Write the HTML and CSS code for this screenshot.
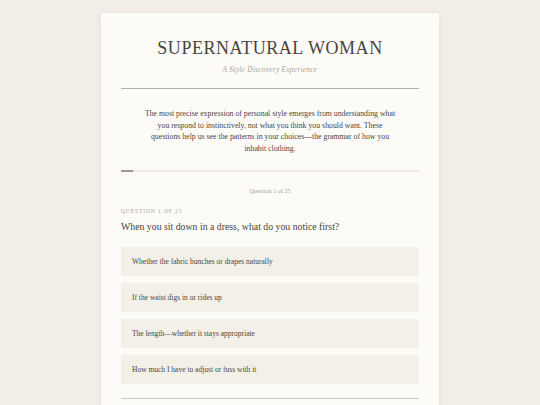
FILE: index.html
```html
<!DOCTYPE html>
<html>
<head>
<meta charset="utf-8">
<link rel="stylesheet" href="styles.css">
</head>
<body>
<main class="card">
  <header class="header">
    <h1 class="title">SUPERNATURAL WOMAN</h1>
    <p class="subtitle">A Style Discovery Experience</p>
  </header>
  <p class="intro">The most precise expression of personal style emerges from understanding what you respond to instinctively, not what you think you should want. These questions help us see the patterns in your choices—the grammar of how you inhabit clothing.</p>
  <div class="progress"><div class="progress-fill" style="width:4%"></div></div>
  <p class="counter">Question 1 of 25</p>
  <section class="question">
    <p class="q-label">Question 1 of 25</p>
    <h2 class="q-text">When you sit down in a dress, what do you notice first?</h2>
    <div class="options">
      <div class="option">Whether the fabric bunches or drapes naturally</div>
      <div class="option">If the waist digs in or rides up</div>
      <div class="option">The length—whether it stays appropriate</div>
      <div class="option">How much I have to adjust or fuss with it</div>
    </div>
  </section>
  <div class="footer-rule"></div>
</main>
</body>
</html>
```
FILE: styles.css
```css
* { box-sizing: border-box; }
html, body { margin: 0; padding: 0; }
body {
  background: #f2efe8;
  font-family: "Liberation Serif", "DejaVu Serif", serif;
  color: #4a443d;
  height: 405px;
  overflow: hidden;
}
.card {
  width: 338px;
  margin: 13px auto 0;
  background: #fcfbf8;
  box-shadow: 0 1px 6px rgba(120, 110, 90, 0.12);
  padding: 0 20px 20px;
}
.header {
  text-align: center;
  padding-top: 25px;
  padding-bottom: 14px;
  border-bottom: 1px solid #b3afa6;
}
.title {
  margin: 0;
  font-weight: 400;
  font-size: 18px;
  letter-spacing: 0.55px;
  line-height: 20px;
  color: #4a443d;
}
.subtitle {
  margin: 7px 0 0;
  font-style: italic;
  font-size: 7.3px;
  letter-spacing: 0.3px;
  color: #a8a29a;
  line-height: 9px;
}
.intro {
  margin: 19px 23px 0;
  text-align: center;
  font-size: 7.8px;
  line-height: 11.5px;
  color: #4a443d;
}
.progress {
  margin-top: 16px;
  height: 2px;
  background: #f1e8df;
}
.progress-fill {
  height: 100%;
  background: #9e978d;
}
.counter {
  margin: 14px 0 0;
  text-align: center;
  font-size: 6.2px;
  color: #a8a29a;
  line-height: 10px;
}
.question { margin-top: 11px; }
.q-label {
  margin: 0;
  text-transform: uppercase;
  font-size: 5.5px;
  letter-spacing: 0.9px;
  color: #a8a29a;
  line-height: 8px;
}
.q-text {
  margin: 4px 0 0;
  font-weight: 400;
  font-size: 9.8px;
  line-height: 16px;
  color: #4a443d;
}
.options {
  margin-top: 12px;
  display: flex;
  flex-direction: column;
  gap: 7px;
}
.option {
  background: #f3f0e8;
  height: 29px;
  display: flex;
  align-items: center;
  padding: 0 11px;
  font-size: 7.5px;
  color: #4a443d;
}
.footer-rule {
  margin-top: 14px;
  border-top: 1px solid #cfcbc3;
}
```
